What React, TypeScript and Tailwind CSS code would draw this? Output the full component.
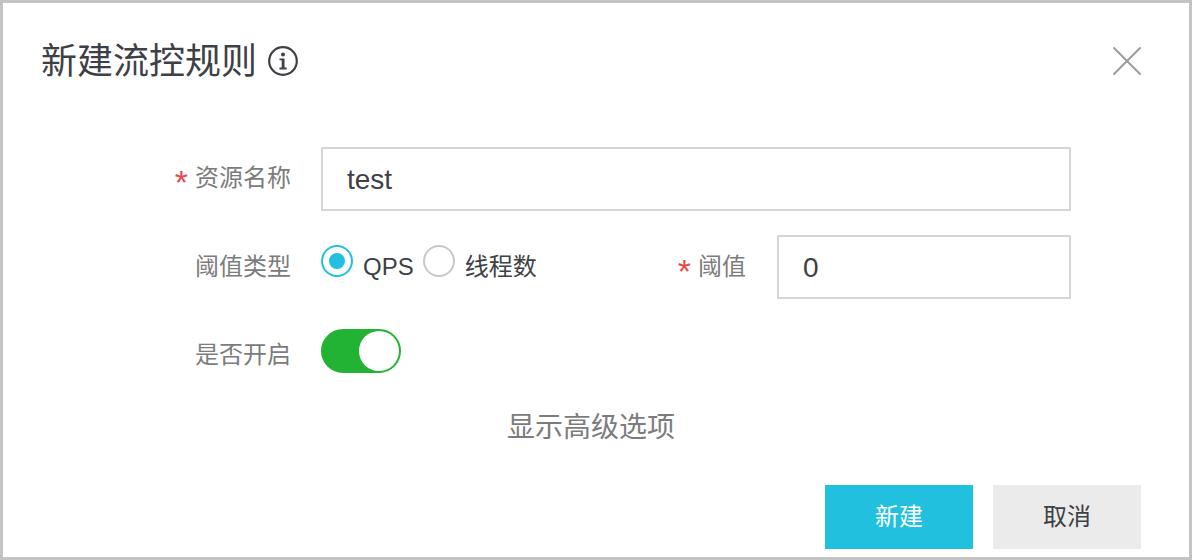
import { X } from 'lucide-react';

const font = { fontFamily: '"Liberation Sans", "Noto Sans CJK SC", sans-serif' };

function Label({ text, required }: { text: string; required?: boolean }) {
  return (
    <span className="flex items-center text-[24px] leading-[32px] text-[#7c7c7c]">
      {required && <span className="mr-[7px] mt-[7px] text-[34px] leading-[32px] text-[#e64a4a]">*</span>}
      {text}
    </span>
  );
}

export default function App() {
  return (
    <div style={font} className="w-[1192px] h-[560px] border-[3px] border-[#c4c4c4] bg-white flex flex-col">
      {/* Header */}
      <div className="h-[144px] pl-[38px] pr-[36px] pt-[32px] flex justify-between items-start">
        <div className="flex items-center h-[52px]">
          <h3 className="mt-[1px] text-[36px] leading-[42px] font-normal text-[#3d4145]">新建流控规则</h3>
          <svg className="ml-[10px]" width="32" height="32" viewBox="0 0 32 32" fill="none">
            <circle cx="16" cy="16" r="13.8" stroke="#3d4145" strokeWidth="2.2" />
            <circle cx="16" cy="9.4" r="2" fill="#3d4145" />
            <path d="M12.5 13.4h5v9.2h2.2v1.8h-7.2v-1.8h2.2v-7.4h-2.2z" fill="#3d4145" />
          </svg>
        </div>
        <X className="text-[#9b9b9b]" size={52} strokeWidth={0.9} />
      </div>

      {/* Form */}
      <div className="flex flex-col">
        <div className="flex items-center h-[64px]">
          <div className="w-[288px] flex justify-end pb-[2px]">
            <Label text="资源名称" required />
          </div>
          <div className="ml-[30px] w-[750px] h-[64px] border-2 border-[#d5d5d5] pl-[24px] pt-[1px] flex items-center text-[28px] text-[#3d4145]">
            test
          </div>
        </div>

        <div className="flex items-center h-[64px] mt-[24px]">
          <div className="w-[288px] flex justify-end">
            <Label text="阈值类型" />
          </div>
          <div className="ml-[30px] w-[280px] flex items-center text-[24px] text-[#3d4145]">
            <span className="w-[32px] h-[32px] mb-[12px] rounded-full border-2 border-[#22c0df] flex items-center justify-center">
              <span className="w-[16px] h-[16px] rounded-full bg-[#22c0df]" />
            </span>
            <span className="ml-[10px]">QPS</span>
            <span className="ml-[9px] w-[32px] h-[32px] mb-[12px] rounded-full border-2 border-[#c8c8c8]" />
            <span className="ml-[10px]">线程数</span>
          </div>
          <div className="w-[145px] flex justify-end">
            <Label text="阈值" required />
          </div>
          <div className="ml-[31px] w-[294px] h-[64px] border-2 border-[#d5d5d5] pl-[24px] pt-[1px] flex items-center text-[28px] text-[#3d4145]">
            0
          </div>
        </div>

        <div className="flex items-center mt-[30px]">
          <div className="w-[288px] flex justify-end pt-[8px]">
            <Label text="是否开启" />
          </div>
          <div className="ml-[30px] w-[80px] h-[44px] rounded-full bg-[#22b335] border-2 border-[#22b335] flex justify-end">
            <span className="w-[40px] h-[40px] rounded-full bg-white" />
          </div>
        </div>

        <div className="mt-[35px] text-center text-[28px] leading-[40px] text-[#7c7c7c] pr-[10px]">显示高级选项</div>
      </div>

      {/* Footer */}
      <div className="mt-[37px] pr-[48px] flex justify-end gap-[20px]">
        <button className="w-[148px] h-[64px] bg-[#22c0df] text-white text-[24px]">新建</button>
        <button className="w-[148px] h-[64px] bg-[#ebebeb] text-[#3d4145] text-[24px]">取消</button>
      </div>
    </div>
  );
}
